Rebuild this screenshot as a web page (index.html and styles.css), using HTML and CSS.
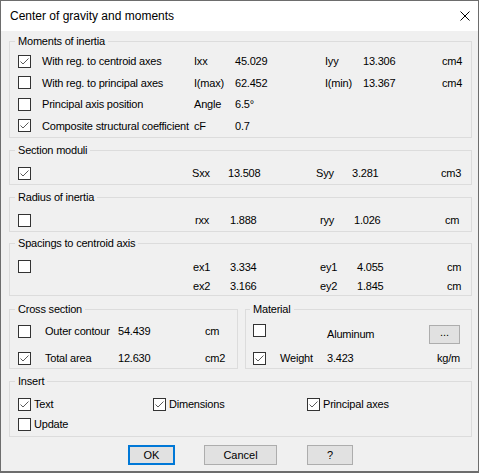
FILE: index.html
```html
<!DOCTYPE html>
<html lang="en">
<head>
    <meta charset="UTF-8">
    <title>Center of gravity and moments</title>
    <link rel="stylesheet" href="styles.css">
</head>
<body>
    <div class="dialog">
        <div class="titlebar">
            <span class="title">Center of gravity and moments</span>
            <svg class="close" width="10" height="10" viewBox="0 0 10 10"><path d="M0.5 0.5L9.5 9.5M9.5 0.5L0.5 9.5" stroke="#000" stroke-width="1" fill="none"/></svg>
        </div>
        <div class="content">
            <fieldset class="group">
                <legend>Moments of inertia</legend>
                <div class="grid moments">
                    <span class="cb on"><svg viewBox="0 0 11 11"><polyline points="1.5,5.5 4,8 9.5,2.5"/></svg></span>
                    <span>With reg. to centroid axes</span><span>Ixx</span><span>45.029</span><span>Iyy</span><span>13.306</span><span>cm4</span>
                    <span class="cb"></span>
                    <span>With reg. to principal axes</span><span>I(max)</span><span>62.452</span><span>I(min)</span><span>13.367</span><span>cm4</span>
                    <span class="cb"></span>
                    <span>Principal axis position</span><span>Angle</span><span>6.5°</span><span></span><span></span><span></span>
                    <span class="cb on"><svg viewBox="0 0 11 11"><polyline points="1.5,5.5 4,8 9.5,2.5"/></svg></span>
                    <span>Composite structural coefficient</span><span>cF</span><span>0.7</span><span></span><span></span><span></span>
                </div>
            </fieldset>

            <fieldset class="group">
                <legend>Section moduli</legend>
                <div class="grid single moduli">
                    <span class="cb on"><svg viewBox="0 0 11 11"><polyline points="1.5,5.5 4,8 9.5,2.5"/></svg></span>
                    <span>Sxx</span><span>13.508</span><span>Syy</span><span>3.281</span><span>cm3</span>
                </div>
            </fieldset>

            <fieldset class="group radius-group">
                <legend>Radius of inertia</legend>
                <div class="grid single radius">
                    <span class="cb"></span>
                    <span>rxx</span><span>1.888</span><span>ryy</span><span>1.026</span><span>cm</span>
                </div>
            </fieldset>

            <fieldset class="group spacing-group">
                <legend>Spacings to centroid axis</legend>
                <div class="grid spacings">
                    <span class="cb"></span>
                    <span>ex1</span><span>3.334</span><span>ey1</span><span>4.055</span><span>cm</span>
                    <span></span>
                    <span>ex2</span><span>3.166</span><span>ey2</span><span>1.845</span><span>cm</span>
                </div>
            </fieldset>

            <div class="pair">
                <fieldset class="group cross-group">
                    <legend>Cross section</legend>
                    <div class="grid cross">
                        <span class="cb"></span>
                        <span>Outer contour</span><span>54.439</span><span>cm</span>
                        <span class="cb on"><svg viewBox="0 0 11 11"><polyline points="1.5,5.5 4,8 9.5,2.5"/></svg></span>
                        <span>Total area</span><span>12.630</span><span>cm2</span>
                    </div>
                </fieldset>
                <fieldset class="group material-group">
                    <legend>Material</legend>
                    <div class="grid material">
                        <span class="cb top"></span>
                        <span></span><span>Aluminum</span><button class="small-btn">...</button>
                        <span class="cb on"><svg viewBox="0 0 11 11"><polyline points="1.5,5.5 4,8 9.5,2.5"/></svg></span>
                        <span>Weight</span><span>3.423</span><span class="unit">kg/m</span>
                    </div>
                </fieldset>
            </div>

            <fieldset class="group">
                <legend>Insert</legend>
                <div class="grid insert">
                    <label class="check"><span class="cb on"><svg viewBox="0 0 11 11"><polyline points="1.5,5.5 4,8 9.5,2.5"/></svg></span>Text</label>
                    <label class="check"><span class="cb on"><svg viewBox="0 0 11 11"><polyline points="1.5,5.5 4,8 9.5,2.5"/></svg></span>Dimensions</label>
                    <label class="check"><span class="cb on"><svg viewBox="0 0 11 11"><polyline points="1.5,5.5 4,8 9.5,2.5"/></svg></span>Principal axes</label>
                    <label class="check"><span class="cb"></span>Update</label>
                </div>
            </fieldset>

            <div class="buttons">
                <button class="btn default ok">OK</button>
                <button class="btn cancel">Cancel</button>
                <button class="btn help">?</button>
            </div>
        </div>
    </div>
</body>
</html>
```

FILE: styles.css
```css
body {
    margin: 0;
    background: #fff;
    font-family: "Liberation Sans", Arial, sans-serif;
    font-size: 11px;
    letter-spacing: -0.2px;
    color: #000;
}
.dialog {
    width: 479px;
    height: 473px;
    box-sizing: border-box;
    border: 1px solid #6d6d6d;
    border-bottom-width: 2px;
    background: #f0f0f0;
}
.titlebar {
    height: 30px;
    background: #fff;
    display: flex;
    align-items: center;
    justify-content: space-between;
    padding: 0 8px 0 9px;
}
.title {
    font-size: 12px;
    letter-spacing: 0;
}
.content {
    padding: 3px 6px 0 8px;
}

/* group boxes */
.group {
    margin: 0 0 5px;
    padding: 0 8px;
    border: 1px solid #dcdcdc;
    min-width: 0;
}
.group legend {
    padding: 0 3px;
    margin-left: -3px;
    line-height: 14px;
}
.radius-group {
    margin-bottom: 4px;
}
.spacing-group {
    margin-bottom: 6px;
}

.grid {
    display: grid;
    align-items: center;
    line-height: 14px;
    white-space: nowrap;
}
.moments {
    margin: 2px 0 1px;
    grid-template-columns: 24px 152px 41px 90px 38px 79px auto;
    grid-template-rows: 22px 21px 22px 21px;
}
.single {
    margin: 6px 0 1px;
    grid-template-rows: 20px;
}
.moduli {
    grid-template-columns: 174px 36px 88px 36px 89px auto;
}
.radius {
    grid-template-columns: 177px 35px 90px 34px 91px auto;
}
.spacings {
    margin-top: 7px;
    grid-template-columns: 175px 37px 90px 37px 90px auto;
    grid-template-rows: 19px 19px;
}

/* cross section + material side by side */
.pair {
    display: flex;
    gap: 7px;
    margin-bottom: 5px;
}
.pair .group {
    margin: 0;
}
.cross-group {
    width: 229px;
    box-sizing: border-box;
    flex: none;
}
.material-group {
    flex: 1;
    padding: 0 11px 0 7px;
}
.cross,
.material {
    margin-top: 5px;
}
.cross {
    grid-template-columns: 27px 73px 87px auto;
    grid-template-rows: 20px 20px;
    row-gap: 7px;
}
.material {
    grid-template-columns: 27px 47px 1fr auto;
    grid-template-rows: 26px 20px;
    row-gap: 1px;
}
.material .unit {
    justify-self: end;
}
.cb.top {
    align-self: start;
    margin-top: 3px;
}
.small-btn {
    width: 31px;
    height: 19px;
    padding: 0 0 4px;
    font: inherit;
    background: #e1e1e1;
    border: 1px solid #adadad;
    line-height: 12px;
}

.insert {
    margin: 6px 0 2px;
    grid-template-columns: 135px 154px auto;
    grid-template-rows: 20px 20px;
}
.check {
    display: flex;
    align-items: center;
    gap: 3px;
}

/* checkbox */
.cb {
    display: block;
    width: 13px;
    height: 13px;
    box-sizing: border-box;
    border: 1px solid #333;
    background: #fff;
    flex: none;
}
.cb svg {
    display: block;
    width: 11px;
    height: 11px;
}
.cb polyline {
    fill: none;
    stroke: #5a5a5a;
    stroke-width: 1;
}

/* dialog buttons */
.buttons {
    display: flex;
    margin: 8px 0 0 119px;
}
.btn {
    height: 20px;
    font: inherit;
    background: #e1e1e1;
    border: 1px solid #adadad;
    padding: 0;
}
.btn.default {
    border: 2px solid #0078d7;
}
.ok {
    width: 47px;
}
.cancel {
    width: 73px;
    margin-left: 29px;
}
.help {
    width: 46px;
    margin-left: 30px;
}
```
